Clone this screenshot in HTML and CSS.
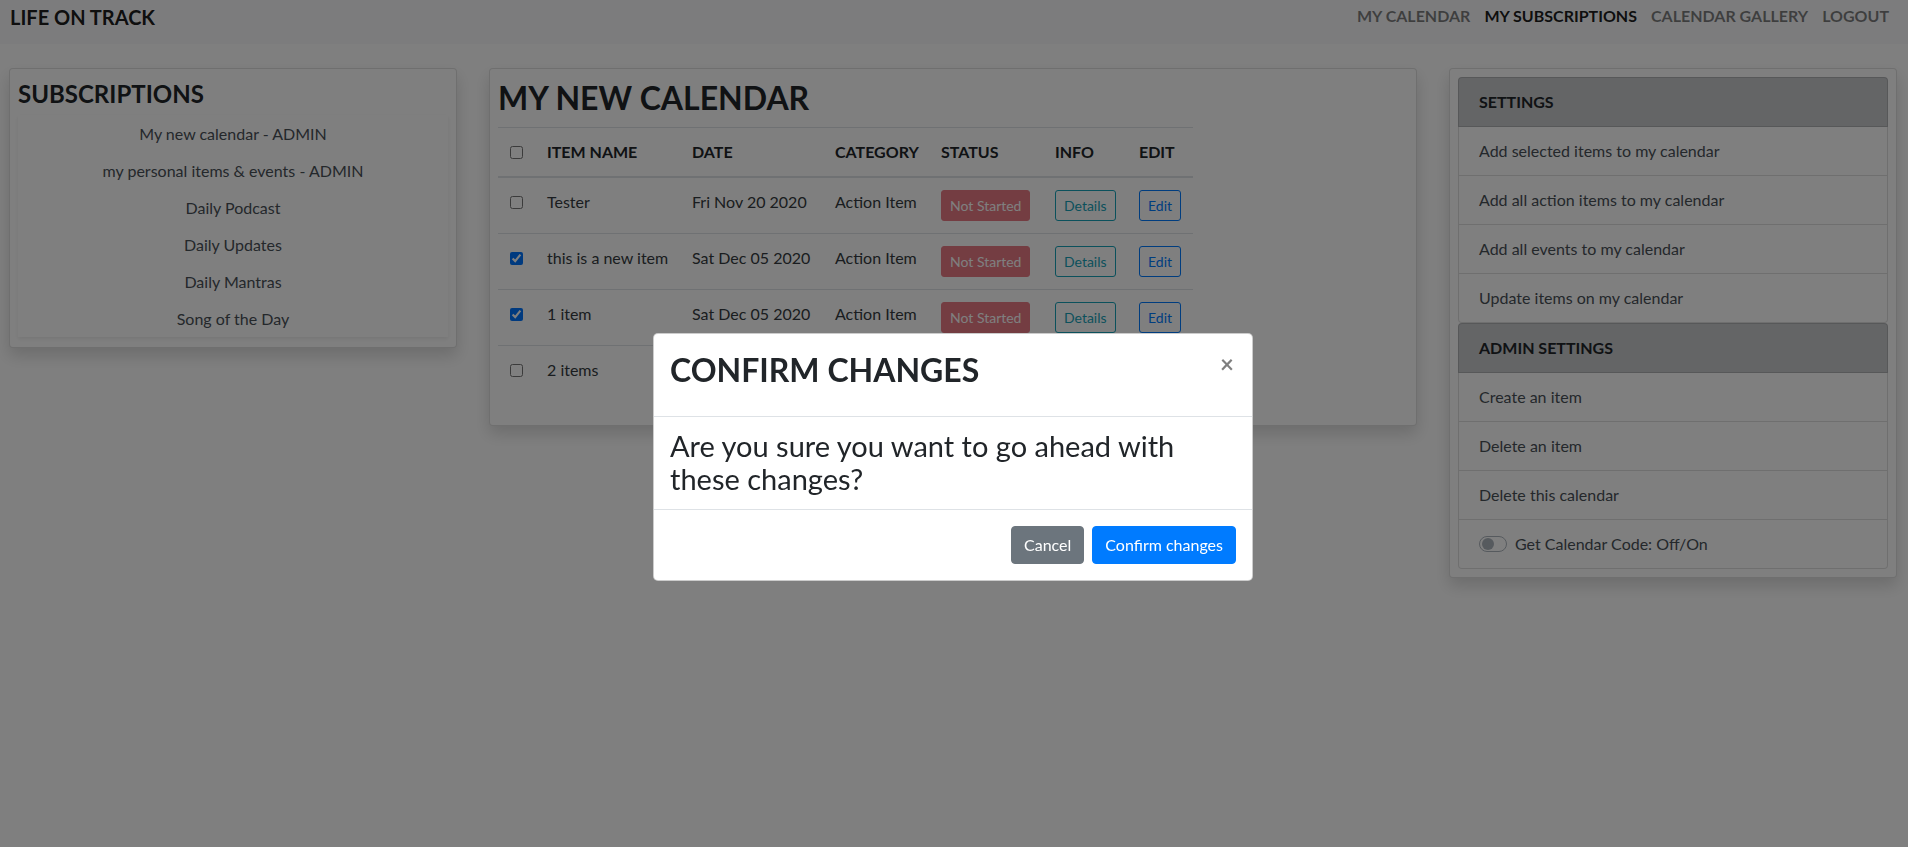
FILE: index.html
```html
<!DOCTYPE html>
<html lang="en">
<head>
<meta charset="utf-8">
<title>Life On Track</title>
<link rel="stylesheet" href="styles.css">
</head>
<body>
<nav class="navbar">
  <a class="brand" href="#">LIFE ON TRACK</a>
  <ul class="nav">
    <li><a class="nav-link" href="#">MY CALENDAR</a></li>
    <li><a class="nav-link active" href="#">MY SUBSCRIPTIONS</a></li>
    <li><a class="nav-link" href="#">CALENDAR GALLERY</a></li>
    <li><a class="nav-link" href="#">LOGOUT</a></li>
  </ul>
</nav>

<main class="layout">
  <section class="card sub-card">
    <h4 class="card-title-sm">SUBSCRIPTIONS</h4>
    <ul class="sub-list">
      <li class="sub-item">My new calendar - ADMIN</li>
      <li class="sub-item">my personal items &amp; events - ADMIN</li>
      <li class="sub-item">Daily Podcast</li>
      <li class="sub-item">Daily Updates</li>
      <li class="sub-item">Daily Mantras</li>
      <li class="sub-item">Song of the Day</li>
    </ul>
  </section>

  <section class="card cal-card">
    <h2 class="card-title-lg">MY NEW CALENDAR</h2>
    <table class="items">
      <colgroup>
        <col class="c1"><col class="c2"><col class="c3"><col class="c4"><col class="c5"><col class="c6"><col class="c7">
      </colgroup>
      <thead>
        <tr>
          <th><input type="checkbox" class="chk"></th>
          <th>ITEM NAME</th>
          <th>DATE</th>
          <th>CATEGORY</th>
          <th>STATUS</th>
          <th>INFO</th>
          <th>EDIT</th>
        </tr>
      </thead>
      <tbody>
        <tr>
          <td><input type="checkbox" class="chk"></td>
          <td>Tester</td>
          <td>Fri Nov 20 2020</td>
          <td>Action Item</td>
          <td><button class="btn-sm status" disabled>Not Started</button></td>
          <td><button class="btn-sm outline-info">Details</button></td>
          <td><button class="btn-sm outline-primary">Edit</button></td>
        </tr>
        <tr>
          <td><input type="checkbox" class="chk" checked></td>
          <td>this is a new item</td>
          <td>Sat Dec 05 2020</td>
          <td>Action Item</td>
          <td><button class="btn-sm status" disabled>Not Started</button></td>
          <td><button class="btn-sm outline-info">Details</button></td>
          <td><button class="btn-sm outline-primary">Edit</button></td>
        </tr>
        <tr>
          <td><input type="checkbox" class="chk" checked></td>
          <td>1 item</td>
          <td>Sat Dec 05 2020</td>
          <td>Action Item</td>
          <td><button class="btn-sm status" disabled>Not Started</button></td>
          <td><button class="btn-sm outline-info">Details</button></td>
          <td><button class="btn-sm outline-primary">Edit</button></td>
        </tr>
        <tr>
          <td><input type="checkbox" class="chk"></td>
          <td>2 items</td>
          <td>Sat Dec 05 2020</td>
          <td>Action Item</td>
          <td><button class="btn-sm status" disabled>Not Started</button></td>
          <td><button class="btn-sm outline-info">Details</button></td>
          <td><button class="btn-sm outline-primary">Edit</button></td>
        </tr>
      </tbody>
    </table>
  </section>

  <section class="card set-card">
    <ul class="group">
      <li class="group-head">SETTINGS</li>
      <li class="group-item">Add selected items to my calendar</li>
      <li class="group-item">Add all action items to my calendar</li>
      <li class="group-item">Add all events to my calendar</li>
      <li class="group-item">Update items on my calendar</li>
    </ul>
    <ul class="group">
      <li class="group-head">ADMIN SETTINGS</li>
      <li class="group-item">Create an item</li>
      <li class="group-item">Delete an item</li>
      <li class="group-item">Delete this calendar</li>
      <li class="group-item switch-row"><span class="switch"><span class="knob"></span></span><span class="switch-label">Get Calendar Code: Off/On</span></li>
    </ul>
  </section>
</main>

<div class="backdrop"></div>
<div class="modal">
  <div class="modal-dialog">
    <div class="modal-header">
      <h2 class="modal-title">CONFIRM CHANGES</h2>
      <button class="close" aria-label="Close">×</button>
    </div>
    <div class="modal-body">
      <p class="modal-text">Are you sure you want to go ahead with these changes?</p>
    </div>
    <div class="modal-footer">
      <button class="btn btn-secondary">Cancel</button>
      <button class="btn btn-primary">Confirm changes</button>
    </div>
  </div>
</div>
</body>
</html>
```

FILE: styles.css
```css
* { box-sizing: border-box; }
html, body { margin: 0; padding: 0; }
body {
  font-family: Lato, "Liberation Sans", sans-serif;
  font-size: 16px;
  line-height: 1.5;
  color: #212529;
  background: #fff;
  width: 1908px;
  height: 847px;
  overflow: hidden;
}

/* navbar */
.navbar {
  height: 44px;
  background: #f8f9fa;
  display: flex;
  align-items: flex-start;
  justify-content: space-between;
  padding: 5px 12px 0 10px;
}
.brand {
  font-size: 20px;
  line-height: 24px;
  font-weight: 700;
  color: rgba(0,0,0,.9);
  text-decoration: none;
}
.nav {
  display: flex;
  list-style: none;
  margin: -1px 0 0;
  padding: 0;
}
.nav-link {
  display: block;
  padding: 0 7px;
  font-size: 16px;
  line-height: 24px;
  font-weight: 700;
  color: rgba(0,0,0,.5);
  text-decoration: none;
}
.nav-link.active { color: rgba(0,0,0,.9); }

/* layout */
.layout {
  display: flex;
  align-items: flex-start;
  gap: 32px;
  padding: 24px 11px 0 9px;
}
.card {
  background: #fff;
  border: 1px solid rgba(0,0,0,.125);
  border-radius: 4px;
  padding: 8px;
  box-shadow: 0 8px 16px rgba(0,0,0,.15);
}
.sub-card { width: 448px; padding-bottom: 10px; }
.cal-card { width: 928px; }
.set-card { width: 448px; }

.card-title-sm {
  margin: 3px 0 6px;
  font-size: 24px;
  line-height: 1.2;
  font-weight: 700;
}
.card-title-lg {
  margin: 0 0 8px;
  font-size: 32px;
  line-height: 42px;
  font-weight: 700;
}

/* subscriptions */
.sub-list {
  list-style: none;
  margin: 0;
  padding: 0;
  box-shadow: 0 2px 4px rgba(0,0,0,.075);
}
.sub-item {
  text-align: center;
  color: #495057;
  padding: 6px 0;
  line-height: 25px;
}

/* table */
.items {
  border-collapse: collapse;
  table-layout: fixed;
  width: 695px;
  margin-bottom: 16px;
}
.c1 { width: 37px; }
.c2 { width: 145px; }
.c3 { width: 143px; }
.c4 { width: 106px; }
.c5 { width: 114px; }
.c6 { width: 84px; }
.c7 { width: 66px; }
.items th, .items td {
  padding: 12px;
  text-align: left;
  vertical-align: top;
  border-top: 1px solid #dee2e6;
  white-space: nowrap;
}
.items th {
  font-weight: 700;
  vertical-align: bottom;
  border-bottom: 2px solid #dee2e6;
}
.items td { color: #343a40; }
.chk {
  margin: 0;
  width: 13px;
  height: 13px;
  vertical-align: -1px;
}
.btn-sm {
  font-family: inherit;
  font-size: 14px;
  line-height: 21px;
  padding: 4px 8px;
  border-radius: 3px;
  border: 1px solid transparent;
  background: transparent;
  display: inline-block;
  vertical-align: top;
}
.status {
  background: #dc3545;
  border-color: #dc3545;
  color: #fff;
  opacity: .65;
}
.outline-info { color: #17a2b8; border-color: #17a2b8; }
.outline-primary { color: #007bff; border-color: #007bff; }

/* settings */
.group {
  list-style: none;
  margin: 0;
  padding: 0;
  border-radius: 4px;
}
.group-head {
  background: #c8cacd;
  border: 1px solid rgba(0,0,0,.125);
  border-radius: 4px 4px 0 0;
  padding: 12px 20px;
  font-weight: 700;
  line-height: 24px;
}
.group-item {
  border: 1px solid rgba(0,0,0,.125);
  border-top: 0;
  padding: 12px 20px;
  line-height: 24px;
  color: #495057;
}
.group-item:last-child { border-radius: 0 0 4px 4px; }
.switch-row { display: flex; align-items: center; }
.switch {
  position: relative;
  width: 28px;
  height: 16px;
  border: 1px solid #adb5bd;
  border-radius: 8px;
  background: #fff;
  flex: none;
}
.knob {
  position: absolute;
  left: 2px;
  top: 1px;
  width: 12px;
  height: 12px;
  border-radius: 50%;
  background: #adb5bd;
}
.switch-label { margin-left: 8px; }

/* modal */
.backdrop {
  position: fixed;
  inset: 0;
  background: rgba(0,0,0,.5);
}
.modal {
  position: fixed;
  inset: 0;
  display: flex;
  justify-content: center;
  align-items: flex-start;
}
.modal-dialog {
  width: 600px;
  margin: 333px 2px 0 0;
  background: #fff;
  border: 1px solid rgba(0,0,0,.2);
  border-radius: 5px;
}
.modal-header {
  display: flex;
  align-items: flex-start;
  padding: 12px 16px 22px;
  border-bottom: 1px solid #dee2e6;
}
.modal-title {
  margin: 0;
  font-size: 32px;
  line-height: 48px;
  font-weight: 700;
}
.close {
  margin: -10px -14px -16px auto;
  padding: 16px;
  background: transparent;
  border: 0;
  font-family: inherit;
  font-size: 24px;
  font-weight: 700;
  line-height: 1;
  color: #000;
  opacity: .5;
}
.modal-body { padding: 12px 16px 14px; }
.modal-text {
  margin: 0;
  font-size: 29px;
  line-height: 33px;
}
.modal-footer {
  display: flex;
  justify-content: flex-end;
  padding: 12px;
  border-top: 1px solid #dee2e6;
}
.btn {
  margin: 4px;
  font-family: inherit;
  font-size: 16px;
  line-height: 24px;
  padding: 6px 12px;
  border: 1px solid transparent;
  border-radius: 4px;
  color: #fff;
}
.btn-secondary { background: #6c757d; border-color: #6c757d; }
.btn-primary { background: #007bff; border-color: #007bff; }
```
